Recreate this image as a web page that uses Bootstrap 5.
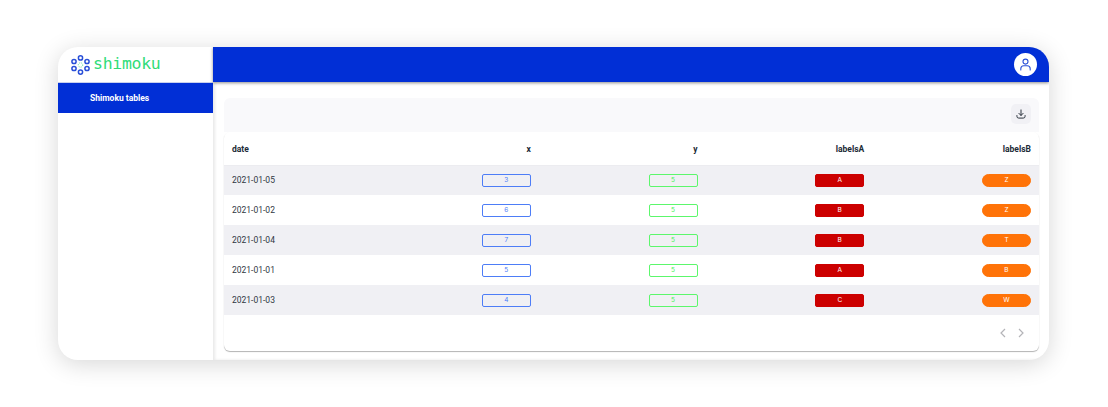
<!DOCTYPE html>
<html>
<head>
  <title>Shimoku tables</title>
  <meta charset="UTF-8">
  <meta name="viewport" content="width=device-width, initial-scale=1.0">
  <link href="https://cdn.jsdelivr.net/npm/bootstrap@5.3.0/dist/css/bootstrap.min.css" rel="stylesheet">
  <style>
    html, body { height: 407px; overflow: hidden; background: #fff; }
    body { padding: 47px 59px 47px 58px; font-family: Roboto, "Liberation Sans", sans-serif; color: #202a36; }
    .app-window {
      height: 313px;
      border-radius: 20px;
      overflow: hidden;
      background: #fff;
      box-shadow: 0 4px 24px rgba(0, 0, 0, 0.16);
    }
    .side-col { width: 155px; flex: none; }
    .logo-box { height: 36px; padding-left: 13px; border-bottom: 1px solid #c8d0ee; }
    .logo-text { font-family: "DejaVu Sans Mono", monospace; font-size: 16.5px; line-height: 1; color: #2fdc78; margin-left: 3px; letter-spacing: -.3px; }
    .side-item { height: 30px; background: #012fd6; color: #fff; font-size: 8.5px; font-weight: 700; padding: 9px 0 0 32px; line-height: 12px; }
    .main-col { min-width: 0; box-shadow: inset 2px 0 3px rgba(0, 0, 0, 0.09); }
    .top-bar { height: 35px; background: #012fd6; padding-right: 12px; box-shadow: 0 1px 3px rgba(0, 0, 0, 0.45); position: relative; }
    .user-dot { width: 23px; height: 23px; background: #fff; border-radius: 50%; }
    .content-area { padding: 16px 10px 9px 11px; }
    .tool-strip { height: 34px; background: #f9f9fb; border-radius: 6px 6px 0 0; padding: 6px 8px 0 0; }
    .dl-btn { width: 20px; height: 20px; background: #f1f1f5; border-radius: 5px; }
    .table-card { background: #fff; border-radius: 6px; box-shadow: 0 1px 1px rgba(0, 0, 0, 0.3); overflow: hidden; }
    .data-tbl { width: 100%; table-layout: fixed; margin: 0; font-size: 8.5px; }
    .data-tbl th, .data-tbl td { padding: 0 8px; vertical-align: middle; border: 0; background: transparent; box-shadow: none; }
    .data-tbl th { height: 33px; padding-top: 2px; font-weight: 700; color: #202a36; border-bottom: 1px solid #ececf0; text-align: right; }
    .data-tbl td { height: 30px; color: #2f3742; text-align: right; }
    .data-tbl th:first-child, .data-tbl td:first-child { text-align: left; width: 148px; }
    .data-tbl tr.odd-row td { background: #f0f0f4; }
    .cell-pill { display: inline-block; width: 49px; height: 13px; font-family: Inter, "Liberation Sans", sans-serif; font-size: 6.5px; line-height: 11px; text-align: center; border: 1px solid; border-radius: 2px; vertical-align: middle; }
    .pill-blue { border-color: #4d7df7; color: #4d7df7; }
    .pill-green { border-color: #5cf76c; color: #4cf05c; }
    .pill-red { background: #cc0000; border-color: #cc0000; color: #fff; }
    .pill-orange { background: #ff7308; border-color: #ff7308; color: #fff; border-radius: 7px; }
    .pager { height: 36px; padding-right: 14px; gap: 10px; }
  </style>
</head>
<body>
  <div class="app-window d-flex">
    <div class="side-col">
      <div class="logo-box d-flex align-items-center">
        <svg width="19" height="20" viewBox="0 0 19 20" fill="none" stroke="#2a50d8" stroke-width="1.5">
          <circle cx="9.5" cy="2.9" r="2.1"/>
          <circle cx="3" cy="6.5" r="2.1"/>
          <circle cx="16" cy="6.5" r="2.1"/>
          <circle cx="3" cy="13.5" r="2.1"/>
          <circle cx="16" cy="13.5" r="2.1"/>
          <circle cx="9.5" cy="17.1" r="2.1"/>
          <circle cx="9.5" cy="10" r="2.2" stroke="#5fe39a" stroke-width="1" stroke-dasharray="1 1"/>
        </svg>
        <span class="logo-text">shimoku</span>
      </div>
      <div class="side-item">Shimoku tables</div>
    </div>
    <div class="main-col flex-grow-1">
      <div class="top-bar d-flex align-items-center justify-content-end">
        <div class="user-dot d-flex align-items-center justify-content-center">
          <svg width="13" height="13" viewBox="0 0 13 13" fill="none" stroke="#2a50d8" stroke-width="1.1" stroke-linecap="round">
            <circle cx="6.5" cy="3.6" r="2.5"/>
            <path d="M1.8 12v-1.2a3 3 0 0 1 3-3h3.4a3 3 0 0 1 3 3V12"/>
          </svg>
        </div>
      </div>
      <div class="content-area">
        <div class="tool-strip d-flex justify-content-end">
          <div class="dl-btn d-flex align-items-center justify-content-center">
            <svg width="10" height="10" viewBox="0 0 11 11" fill="none" stroke="#2b323c" stroke-width="1.1" stroke-linecap="round" stroke-linejoin="round">
              <path d="M5.5 1v6M3.2 4.8l2.3 2.3 2.3-2.3"/>
              <path d="M1 7.2v.8a2 2 0 0 0 2 2h5a2 2 0 0 0 2-2v-.8"/>
            </svg>
          </div>
        </div>
        <div class="table-card">
          <table class="table data-tbl">
            <thead>
              <tr><th>date</th><th>x</th><th>y</th><th>labelsA</th><th>labelsB</th></tr>
            </thead>
            <tbody>
              <tr class="odd-row"><td>2021-01-05</td><td><span class="cell-pill pill-blue">3</span></td><td><span class="cell-pill pill-green">5</span></td><td><span class="cell-pill pill-red">A</span></td><td><span class="cell-pill pill-orange">Z</span></td></tr>
              <tr><td>2021-01-02</td><td><span class="cell-pill pill-blue">6</span></td><td><span class="cell-pill pill-green">5</span></td><td><span class="cell-pill pill-red">B</span></td><td><span class="cell-pill pill-orange">Z</span></td></tr>
              <tr class="odd-row"><td>2021-01-04</td><td><span class="cell-pill pill-blue">7</span></td><td><span class="cell-pill pill-green">5</span></td><td><span class="cell-pill pill-red">B</span></td><td><span class="cell-pill pill-orange">T</span></td></tr>
              <tr><td>2021-01-01</td><td><span class="cell-pill pill-blue">5</span></td><td><span class="cell-pill pill-green">5</span></td><td><span class="cell-pill pill-red">A</span></td><td><span class="cell-pill pill-orange">B</span></td></tr>
              <tr class="odd-row"><td>2021-01-03</td><td><span class="cell-pill pill-blue">4</span></td><td><span class="cell-pill pill-green">5</span></td><td><span class="cell-pill pill-red">C</span></td><td><span class="cell-pill pill-orange">W</span></td></tr>
            </tbody>
          </table>
          <div class="pager d-flex align-items-center justify-content-end">
            <svg width="8" height="10" viewBox="0 0 8 10" fill="none" stroke="#b4b4b8" stroke-width="1.2"><path d="M6 1 2 5l4 4"/></svg>
            <svg width="8" height="10" viewBox="0 0 8 10" fill="none" stroke="#b4b4b8" stroke-width="1.2"><path d="M2 1l4 4-4 4"/></svg>
          </div>
        </div>
      </div>
    </div>
  </div>
  <script src="https://cdn.jsdelivr.net/npm/bootstrap@5.3.0/dist/js/bootstrap.bundle.min.js"></script>
</body>
</html>
